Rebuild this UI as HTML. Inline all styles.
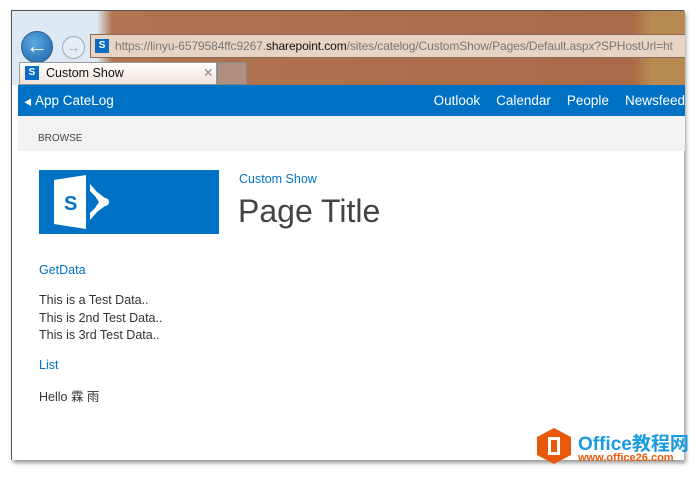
<!DOCTYPE html>
<html><head><meta charset="utf-8"><style>
*{margin:0;padding:0;box-sizing:border-box}
body{width:700px;height:477px;background:#fff;position:relative;overflow:hidden;font-family:"Liberation Sans","Noto Sans CJK SC",sans-serif}
.win{position:absolute;left:11px;top:10px;width:673px;height:450px;border:1px solid #555;border-right:none;border-bottom:none;background:#fff;box-shadow:2px 3px 4px rgba(0,0,0,.4)}
.chrome{position:absolute;left:0;top:0;width:673px;height:74px;background:linear-gradient(90deg,#dfe9f3 0,#dfe9f3 85px,#b07450 100px,#a86a48 620px,#b88a52 640px)}
.addr{position:absolute;left:78px;top:23px;width:595px;height:24px;background:#e8d4c4;border:1px solid #8a6a58;border-right:none;font-size:12px;line-height:22px;padding-left:24px;color:#777;white-space:nowrap;overflow:hidden;letter-spacing:-0.1px}
.addr b{font-weight:normal;color:#111}
.back{position:absolute;left:9px;top:20px;width:32px;height:32px;border-radius:50%;background:radial-gradient(circle at 40% 35%,#5aa8e0,#1a64a8);border:1px solid #2a5f90;color:#fff;font-size:22px;line-height:28px;text-align:center;font-weight:bold}
.fwd{position:absolute;left:50px;top:25px;width:23px;height:23px;border-radius:50%;border:1px solid #9ab;background:#e4ecf4;color:#aab;font-size:14px;line-height:20px;text-align:center}
.tab{position:absolute;left:7px;top:51px;width:198px;height:23px;background:linear-gradient(#fff,#f0e4dc);border:1px solid #999;font-size:12.5px;line-height:21px;padding-left:26px;color:#111}
.tab2{position:absolute;left:205px;top:51px;width:30px;height:23px;background:#b09080;border:1px solid #888}
.sp{position:absolute;width:14px;height:14px;background:#0a6cc4;color:#fff;font-size:10px;font-weight:bold;line-height:14px;text-align:center}
.nav{position:absolute;left:6px;top:74px;width:667px;height:31px;background:#0072c6;color:#fff;font-size:13.5px;line-height:31px}
.nav .r{position:absolute;top:0;right:0;white-space:nowrap}
.nav .r span{margin-left:16px}
.browse{position:absolute;left:6px;top:105px;width:667px;height:35px;background:#f2f2f2;font-size:10px;color:#444;line-height:12px;padding:17px 0 0 20px}
.logo{position:absolute;left:27px;top:159px;width:180px;height:64px;background:#0072c6}
.c{position:absolute;left:27px;font-size:12.5px;color:#333}
.blue{color:#0072c6}
</style></head><body>
<div class="win">
 <div class="chrome">
  <div class="back">&#8592;</div><div class="fwd">&#8594;</div>
  <div class="addr"><div class="sp" style="left:4px;top:4px">S</div>https://linyu-6579584ffc9267.<b>sharepoint.com</b>/sites/catelog/CustomShow/Pages/Default.aspx?SPHostUrl=ht</div>
  <div class="tab"><div class="sp" style="left:5px;top:3px">S</div>Custom Show<span style="position:absolute;left:183px;color:#888">✕</span></div>
  <div class="tab2"></div>
 </div>
 <div class="nav"><span style="font-size:8px;padding-left:6px">◀</span> App CateLog<div class="r"><span>Outlook</span><span>Calendar</span><span>People</span><span>Newsfeed</span></div></div>
 <div class="browse">BROWSE</div>
 <div class="logo"><svg width="180" height="64" viewBox="0 0 180 64"><path d="M15 10 L47 5 L47 59 L15 54 Z" fill="#fff"/><text x="25" y="40" font-size="20" font-weight="bold" fill="#0072c6" font-family="Liberation Sans">S</text><path d="M51 14 L58 22 L66 28 A4 4 0 0 1 66 36 L58 42 L51 50 L51 43 L56 38 L60 32 L56 26 L51 21 Z" fill="#fff"/></svg></div>
 <div class="c blue" style="left:227px;top:161px;font-size:12.5px">Custom Show</div>
 <div class="c" style="left:226px;top:182px;font-size:32px;color:#444">Page Title</div>
 <div class="c blue" style="top:252px">GetData</div>
 <div class="c" style="top:281px;line-height:17.5px">This is a Test Data..<br>This is 2nd Test Data..<br>This is 3rd Test Data..</div>
 <div class="c blue" style="top:347px">List</div>
 <div class="c" style="top:375px">Hello 霖 雨</div>
</div>
<div style="position:absolute;left:537px;top:428px;width:34px;height:36px;background:#e8590c;clip-path:polygon(50% 0,100% 25%,100% 75%,50% 100%,0 75%,0 25%)"><div style="position:absolute;left:11px;top:9px;width:12px;height:18px;border:3px solid #fff"></div></div>
<div style="position:absolute;left:578px;top:429px;font-size:19px;font-weight:bold;color:#1a9ae0;white-space:nowrap">Office教程网</div>
<div style="position:absolute;left:578px;top:452px;font-size:11px;font-weight:bold;color:#e8590c">www.office26.com</div>
</body></html>
